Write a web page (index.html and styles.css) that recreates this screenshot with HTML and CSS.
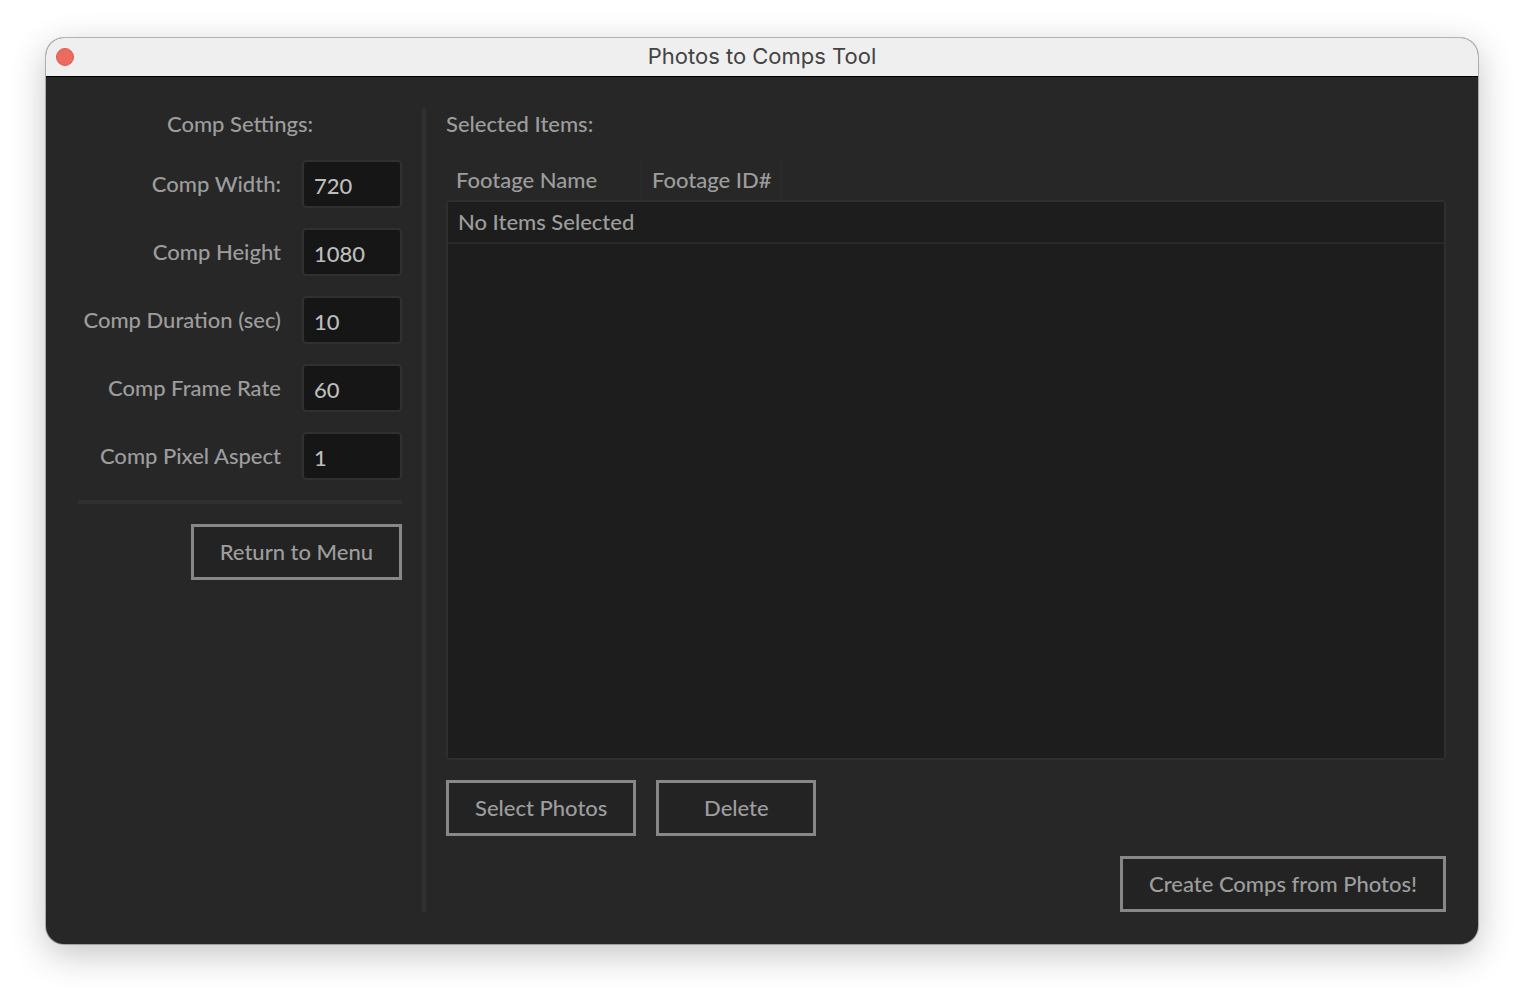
FILE: index.html
```html
<!DOCTYPE html>
<html lang="en">
<head>
<meta charset="utf-8">
<title>Photos to Comps Tool</title>
<link rel="stylesheet" href="styles.css">
</head>
<body>
<main class="window">
  <header class="titlebar">
    <button class="close" type="button" aria-label="Close"></button>
    <h1 class="title">Photos to Comps Tool</h1>
  </header>
  <div class="content">
    <form class="settings">
      <h2 class="heading heading-center">Comp Settings:</h2>
      <div class="field"><label for="width">Comp Width:</label><input id="width" type="text" value="720"></div>
      <div class="field"><label for="height">Comp Height</label><input id="height" type="text" value="1080"></div>
      <div class="field"><label for="duration">Comp Duration (sec)</label><input id="duration" type="text" value="10"></div>
      <div class="field"><label for="rate">Comp Frame Rate</label><input id="rate" type="text" value="60"></div>
      <div class="field"><label for="aspect">Comp Pixel Aspect</label><input id="aspect" type="text" value="1"></div>
      <hr class="rule">
      <button class="button align-end" type="button">Return to Menu</button>
    </form>
    <div class="divider"></div>
    <section class="items">
      <h2 class="heading">Selected Items:</h2>
      <table class="list">
        <thead><tr><th class="col-name" scope="col">Footage Name</th><th class="col-id" scope="col">Footage ID#</th></tr></thead>
        <tbody><tr><td>No Items Selected</td></tr></tbody>
      </table>
      <div class="actions">
        <button class="button" type="button">Select Photos</button>
        <button class="button button-wide" type="button">Delete</button>
      </div>
      <button class="button align-end" type="button">Create Comps from Photos!</button>
    </section>
  </div>
</main>
</body>
</html>
```
FILE: styles.css
```css
* {
  box-sizing: border-box;
}

body {
  display: flex;
  min-height: 100vh;
  margin: 0;
  padding: 38px 46px 54px;
  background: #fff;
  color: #9d9d9d;
  font: 500 22px/32px Lato, "Open Sans", sans-serif;
  white-space: nowrap;
}

.window {
  display: flex;
  flex: 1;
  flex-direction: column;
  overflow: hidden;
  border-radius: 18px;
  background: #272727;
  box-shadow: 0 0 0 1px rgba(0, 0, 0, 0.25), 0 10px 36px rgba(0, 0, 0, 0.24);
}

.titlebar {
  display: grid;
  grid-template-columns: 1fr auto 1fr;
  align-items: center;
  height: 39px;
  padding: 0 10px;
  border-bottom: 1px solid #000;
  background: #efefef;
}

.close {
  width: 18px;
  height: 18px;
  padding: 0;
  border: 1px solid #db5c50;
  border-radius: 50%;
  background: #ed6a5e;
}

.title {
  margin: 0;
  padding-bottom: 2px;
  color: #434343;
  font: 22px/32px Inter, sans-serif;
}

.content {
  display: flex;
  flex: 1;
  gap: 20px;
  padding: 31px 32px 32px;
}

.settings,
.items {
  display: flex;
  flex-direction: column;
  gap: 20px;
}

.settings {
  width: 324px;
}

.items {
  flex: 1;
}

.heading {
  margin: 0;
  font: inherit;
}

.heading-center {
  text-align: center;
}

.field {
  display: flex;
  align-items: center;
  justify-content: flex-end;
  gap: 21px;
}

.field input {
  width: 100px;
  height: 48px;
  padding: 2px 10px 0;
  border: 2px solid #303030;
  border-radius: 4px;
  background: #161616;
  color: #bdbdbd;
  font: inherit;
}

.rule {
  width: 100%;
  height: 4px;
  margin: 0;
  border: 0;
  background: #303030;
}

.divider {
  width: 4px;
  background: #303030;
}

.button {
  height: 56px;
  padding: 0 26px;
  border: 3px solid #878787;
  background: #232323;
  color: inherit;
  font: inherit;
}

.button-wide {
  min-width: 160px;
}

.align-end {
  align-self: flex-end;
}

.actions {
  display: flex;
  gap: 20px;
}

.list {
  display: flex;
  flex: 1;
  flex-direction: column;
}

.list thead,
.list tbody {
  display: block;
}

.list tr {
  display: flex;
}

.list th {
  height: 40px;
  padding: 4px 10px;
  border-right: 1px solid #2c2c2c;
  font-weight: inherit;
  text-align: left;
}

.list .col-name {
  width: 196px;
}

.list .col-id {
  width: 140px;
}

.list tbody {
  flex: 1;
  border: 2px solid #2e2e2e;
  border-radius: 4px;
  background: #1d1d1d;
}

.list td {
  flex: 1;
  padding: 4px 10px;
  border-bottom: 2px solid #292929;
}
```
